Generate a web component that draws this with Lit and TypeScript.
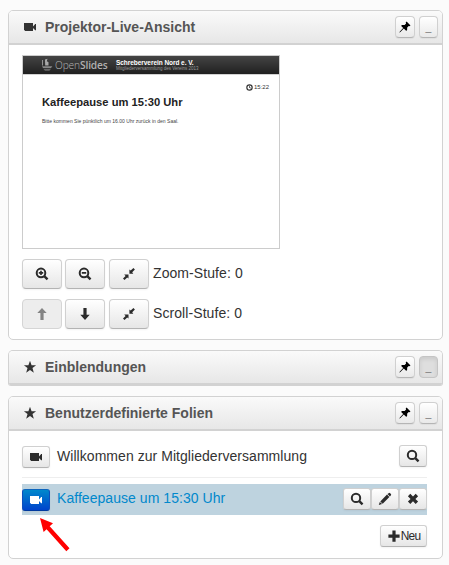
import { LitElement, html, css, svg } from "lit";
import { customElement, property } from "lit/decorators.js";

const shapes: Record<string, unknown> = {
  camera: svg`<path d="M1 3h9v8H2.2L1 9.8zM10 6.4 12.2 4H13v6.2h-.8L10 8z"/>`,
  star: svg`<path d="M7 .7 8.6 5.3H13.1L9.5 8.1 10.8 12.7 7 10 3.2 12.7 4.5 8.1.9 5.3H5.4z"/>`,
  pin: svg`<path d="M8.6 1.6 12.5 5.5 11.4 6.3 10.7 5.9 9.2 7.5 9.1 10.2 8.1 10.8 5.8 8.5 2.4 12.1 1.2 12.8 1.9 11.6 5.2 8 3.2 6 3.8 5 6.6 4.9 8.1 3.4 7.7 2.6z"/>`,
  search: svg`<circle cx="6" cy="5.9" r="4.2" fill="none" stroke="currentColor" stroke-width="2"/><path d="M8.4 10 10.1 8.3 13.4 11.6 11.7 13.3z"/>`,
  zoomin: svg`<circle cx="6" cy="5.9" r="4.3" fill="none" stroke="currentColor" stroke-width="2"/><path d="M8.4 10 10.1 8.3 13.4 11.6 11.7 13.3zM5.2 3.7h1.6v1.4h1.4v1.6H6.8v1.4H5.2V6.7H3.8V5.1h1.4z"/>`,
  zoomout: svg`<circle cx="6" cy="5.9" r="4.3" fill="none" stroke="currentColor" stroke-width="2"/><path d="M8.4 10 10.1 8.3 13.4 11.6 11.7 13.3zM3.8 5.1h4.4v1.6H3.8z"/>`,
  shrink: svg`<path d="M7.4 2.6 8.7 3.6 11.4 1.1 12.9 2.6 10.2 5.3 11.3 6.7H7.4zM2.2 7.4H6.5V11.5L5.2 10.5 2.5 13.1 1 11.6 3.6 8.9z"/>`,
  up: svg`<path d="M7 .9 11.7 6.1H8.6V13H5.4V6.1H2.3z"/>`,
  down: svg`<path d="M7 13 11.7 7.8H8.6V1H5.4V7.8H2.3z"/>`,
  pencil: svg`<path d="M10.6 1.2 11.6.7 13.2 2.3 12.8 3.4 11.9 4.4 9.5 2.1zM9 2.6 11.4 4.9 4.7 11.7 2.3 9.4zM1.8 10 4.1 12.1.8 13z"/>`,
  remove: svg`<path d="M4.3 1.8 7 4.5 9.7 1.8 12.1 4.2 9.4 6.9 12.1 9.6 9.7 12 7 9.3 4.3 12 1.9 9.6 4.6 6.9 1.9 4.2z"/>`,
  plus: svg`<path d="M5.4 1.5h3.2v4h4v3.2h-4v4H5.4v-4h-4V5.5h4z"/>`,
  clock: svg`<circle cx="7" cy="7" r="5.3" fill="none" stroke="currentColor" stroke-width="2.4"/><path d="M6.3 3.4h1.5v3.2l2.4 1.2-.7 1.3-3.2-1.5z"/>`,
};

@customElement("glyph-icon")
class GlyphIcon extends LitElement {
  @property() name = "";
  static styles = css`
    :host { display: inline-flex; width: 14px; height: 14px; flex: none; }
    svg { width: 100%; height: 100%; fill: currentColor; }
  `;
  render() {
    return html`<svg viewBox="0 0 14 14">${shapes[this.name]}</svg>`;
  }
}

@customElement("widget-panel")
class WidgetPanel extends LitElement {
  @property() icon = "";
  @property() heading = "";
  @property({ type: Boolean, reflect: true }) collapsed = false;
  static styles = css`
    :host {
      display: block; box-sizing: border-box; background: #fff;
      border: 1px solid #d2d2d2; border-radius: 5px; overflow: hidden;
    }
    :host([collapsed]) { border-bottom: 0; border-radius: 5px 5px 3px 3px; }
    .head {
      display: flex; align-items: center; box-sizing: border-box; height: 34px;
      padding: 0 4px 0 14px; border-bottom: 2px solid #d2d2d2;
      background: linear-gradient(#fafafa, #e7e7e7); color: #333;
    }
    :host([collapsed]) .head { height: 35px; border-bottom-width: 3px; }
    .title { flex: 1; margin: 0 0 0 8px; font-size: 14px; line-height: 20px; font-weight: bold; color: #555; white-space: nowrap; }
    .tool {
      display: flex; align-items: center; justify-content: center; box-sizing: border-box;
      height: 22px; width: 20px; margin-left: 4px; border: 1px solid #d0d0d0; border-bottom-color: #b5b5b5;
      border-radius: 4px; background: linear-gradient(#fff, #e9e9e9); color: #000;
      font-size: 10.5px; box-shadow: 0 1px 1px #0000000c;
    }
    .tool glyph-icon { width: 14px; height: 14px; margin-left: -1px; }
    .min { width: 19px; color: #777; }
    :host([collapsed]) .min { background: #dedede; border-color: #c4c4c4; box-shadow: inset 0 2px 4px #00000018; }
  `;
  render() {
    return html`
      <div class="head">
        <glyph-icon name=${this.icon}></glyph-icon>
        <h3 class="title">${this.heading}</h3>
        <span class="tool"><glyph-icon name="pin"></glyph-icon></span>
        <span class="tool min">_</span>
      </div>
      <slot></slot>`;
  }
}

@customElement("app-root")
class AppRoot extends LitElement {
  static styles = css`
    :host {
      display: flex; flex-direction: column; gap: 10px; box-sizing: border-box;
      height: 565px; padding: 10px 6px 0 8px; background: #fbfbfb; color: #333;
      font: 14px/20px "Liberation Sans", Arial, sans-serif; overflow: hidden; position: relative;
    }
    widget-panel { flex: none; }
    .live { height: 330px; }
    .overlays { height: 36px; }
    .slides { height: 163px; }
    .body { padding: 10px 15px 0 13px; }

    .preview { box-sizing: border-box; width: 258px; height: 194px; border: 1px solid #ccc; background: #fff; }
    .bar {
      display: flex; align-items: center; box-sizing: border-box; height: 19px; padding-left: 18px;
      border-bottom: 1px solid #d2d2d2; background: linear-gradient(#444, #202020); color: #fff;
    }
    .ship { width: 12px; height: 14px; }
    .brand { width: 53px; margin-left: 2px; font: 300 10.2px/16px "Open Sans", sans-serif; color: #b4b4b4; white-space: nowrap; letter-spacing: -.13px; }
    .brand b { font-weight: 600; color: #b0b0b0; }
    .event { margin-left: 8px; white-space: nowrap; }
    .name { font-size: 6.5px; line-height: 7px; font-weight: bold; letter-spacing: -.05px; }
    .sub { font-size: 4.5px; line-height: 5px; color: #999; }
    .clock { display: flex; align-items: center; justify-content: flex-end; gap: 1px; height: 10px; margin: 7px 10px 0 0; font-size: 6px; }
    .clock glyph-icon { width: 7px; height: 7px; }
    .slide-title { margin: 2px 0 0 19px; font-size: 11.2px; line-height: 16px; font-weight: bold; color: #222; white-space: nowrap; }
    .slide-text { margin: 7px 0 0 19px; font-size: 5px; line-height: 8px; color: #444; white-space: nowrap; letter-spacing: .01px; }

    .controls { display: flex; align-items: center; height: 30px; margin-top: 10px; }
    .btn {
      display: flex; align-items: center; justify-content: center; box-sizing: border-box; flex: none;
      width: 28px; height: 22px; border: 1px solid #d0d0d0; border-bottom-color: #b3b3b3; border-radius: 3px;
      background: linear-gradient(#fff, #e6e6e6); box-shadow: 0 1px 2px #0000000d; color: #2b2b2b;
    }
    .big { width: 40px; height: 30px; margin-right: 3px; border-radius: 4px; }
    .big + .big + .big { margin-left: 1px; margin-right: 4px; }
    .disabled { background: #ededed; border-color: #d5d5d5; box-shadow: none; color: #848484; }
    .primary { background: linear-gradient(#0088cc, #0044cc); border-color: #0d65bd #0d4fbd #003a9e; color: #fff; }
    .level { padding-bottom: 2px; white-space: nowrap; letter-spacing: .08px; }

    .item { display: flex; align-items: flex-start; box-sizing: border-box; }
    .item > .btn:first-child { margin-top: 1px; }
    .first { height: 33px; border-bottom: 1px solid #eee; }
    .active { height: 31px; margin-top: 6px; padding-top: 4px; background: #bed3df; }
    .active .label { color: #0088cc; }
    .label { flex: 1; margin-left: 7px; white-space: nowrap; letter-spacing: .05px; }
    .first .label { padding-top: 1px; }
    .slide-list { padding-top: 14px; }
    .group { display: flex; }
    .new-row { display: flex; justify-content: flex-end; margin-top: 10px; }
    .new { width: 47px; font-size: 11.9px; }
    .new-text { letter-spacing: -.7px; margin: 0 0 1px 0; }
    .arrow { position: absolute; left: 38px; top: 516px; width: 34px; height: 38px; }
  `;

  row(first: string, second: string, label: string, off = "") {
    return html`<div class="controls">
      <span class="btn big ${off}"><glyph-icon name=${first}></glyph-icon></span>
      <span class="btn big"><glyph-icon name=${second}></glyph-icon></span>
      <span class="btn big"><glyph-icon name="shrink"></glyph-icon></span>
      <span class="level">${label}</span>
    </div>`;
  }

  render() {
    return html`
      <widget-panel class="live" icon="camera" heading="Projektor-Live-Ansicht">
        <div class="body">
          <div class="preview">
            <div class="bar">
              <svg class="ship" viewBox="0 0 12 14">
                <path d="M4 1.5 6.5.8 5.8 3.2 7.5 4.2V7.5H4.2zM1.2 2h.8v5.5h-.8z" fill="#aaa" />
                <path d="M1 8.2h10.4L10 10H2z" fill="#888" />
                <path d="M2.2 10.8H10L8.4 12.8H4z" fill="#666" />
              </svg>
              <span class="brand">Open<b>Slides</b></span>
              <div class="event">
                <div class="name">Schreberverein Nord e. V.</div>
                <div class="sub">Mitgliederversammlung des Vereins 2013</div>
              </div>
            </div>
            <div class="clock"><glyph-icon name="clock"></glyph-icon>15:22</div>
            <div class="slide-title">Kaffeepause um 15:30 Uhr</div>
            <div class="slide-text">Bitte kommen Sie pünktlich um 16.00 Uhr zurück in den Saal.</div>
          </div>
          ${this.row("zoomin", "zoomout", "Zoom-Stufe: 0")}
          ${this.row("up", "down", "Scroll-Stufe: 0", "disabled")}
        </div>
      </widget-panel>
      <widget-panel class="overlays" icon="star" heading="Einblendungen" collapsed></widget-panel>
      <widget-panel class="slides" icon="star" heading="Benutzerdefinierte Folien">
        <div class="body slide-list">
          <div class="item first">
            <span class="btn"><glyph-icon name="camera"></glyph-icon></span>
            <span class="label">Willkommen zur Mitgliederversammlung</span>
            <span class="btn"><glyph-icon name="search"></glyph-icon></span>
          </div>
          <div class="item active">
            <span class="btn primary"><glyph-icon name="camera"></glyph-icon></span>
            <span class="label">Kaffeepause um 15:30 Uhr</span>
            <span class="group">
              <span class="btn"><glyph-icon name="search"></glyph-icon></span>
              <span class="btn"><glyph-icon name="pencil"></glyph-icon></span>
              <span class="btn"><glyph-icon name="remove"></glyph-icon></span>
            </span>
          </div>
          <div class="new-row"><span class="btn new"><glyph-icon name="plus"></glyph-icon><span class="new-text">Neu</span></span></div>
        </div>
      </widget-panel>
      <svg class="arrow" viewBox="0 0 34 38"><path d="M2 2 15 7.3 11.7 10.2 31.5 32.3 28.3 35.3 8.6 13.3 5.6 16z" fill="#f00" /></svg>
    `;
  }
}
